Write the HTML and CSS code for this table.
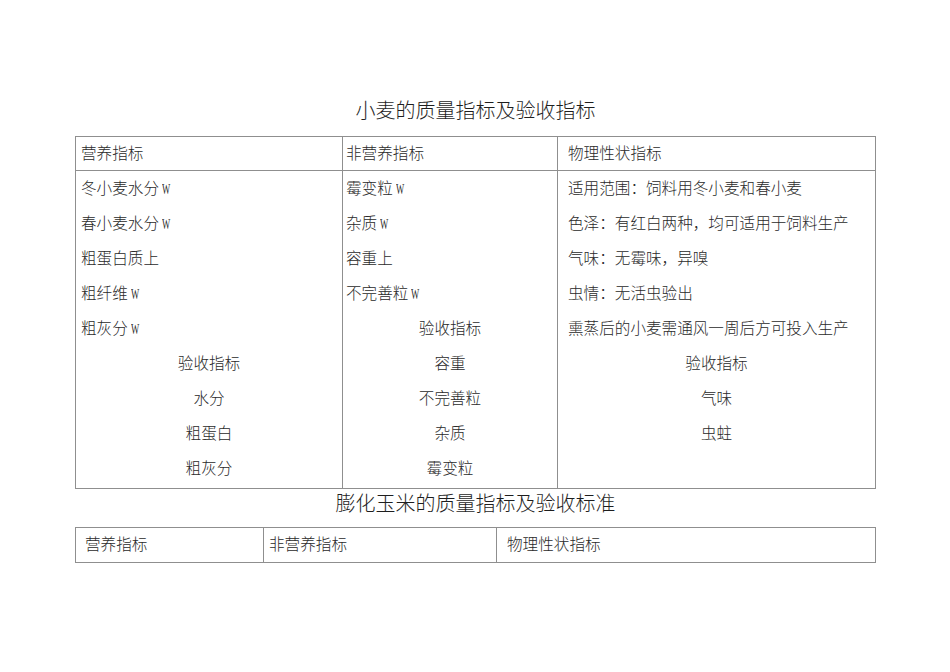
FILE: index.html
```html
<!DOCTYPE html>
<html lang="zh">
<head>
<meta charset="utf-8">
<link rel="stylesheet" href="styles.css">
</head>
<body>
<div class="page">
  <div class="title">小麦的质量指标及验收指标</div>
  <div class="tbl t1">
    <div class="hd c1">营养指标</div>
    <div class="hd c2">非营养指标</div>
    <div class="hd c3 last">物理性状指标</div>
    <div class="col c1">
      <div class="ln">冬小麦水分<span class="w">W</span></div>
      <div class="ln">春小麦水分<span class="w">W</span></div>
      <div class="ln">粗蛋白质上</div>
      <div class="ln">粗纤维<span class="w">W</span></div>
      <div class="ln">粗灰分<span class="w">W</span></div>
      <div class="ln ctr">验收指标</div>
      <div class="ln ctr">水分</div>
      <div class="ln ctr">粗蛋白</div>
      <div class="ln ctr">粗灰分</div>
    </div>
    <div class="col c2">
      <div class="ln">霉变粒<span class="w">W</span></div>
      <div class="ln">杂质<span class="w">W</span></div>
      <div class="ln">容重上</div>
      <div class="ln">不完善粒<span class="w">W</span></div>
      <div class="ln ctr">验收指标</div>
      <div class="ln ctr">容重</div>
      <div class="ln ctr">不完善粒</div>
      <div class="ln ctr">杂质</div>
      <div class="ln ctr">霉变粒</div>
    </div>
    <div class="col c3 last">
      <div class="ln">适用范围：饲料用冬小麦和春小麦</div>
      <div class="ln">色泽：有红白两种，均可适用于饲料生产</div>
      <div class="ln">气味：无霉味，异嗅</div>
      <div class="ln">虫情：无活虫验出</div>
      <div class="ln">熏蒸后的小麦需通风一周后方可投入生产</div>
      <div class="ln ctr">验收指标</div>
      <div class="ln ctr">气味</div>
      <div class="ln ctr">虫蛀</div>
    </div>
  </div>
  <div class="title t2title">膨化玉米的质量指标及验收标准</div>
  <div class="tbl t2">
    <div class="hd d1">营养指标</div>
    <div class="hd d2">非营养指标</div>
    <div class="hd d3 last">物理性状指标</div>
  </div>
</div>
</body>
</html>
```
FILE: styles.css
```css
html, body {
  margin: 0;
  padding: 0;
  background: #ffffff;
}
body {
  font-family: "Noto Sans CJK SC", "Liberation Serif", serif;
  color: #2a2a2a;
  font-weight: 300;
}
.page {
  width: 801px;
  padding: 96px 0 0 75px;
}
.title {
  text-align: center;
  font-size: 20px;
  line-height: 28px;
  height: 28px;
  margin-bottom: 12px;
  color: #1e1e1e;
}
.t2title {
  margin-bottom: 10px;
}
.tbl {
  display: grid;
  border: 1px solid #8f8f8f;
  font-size: 15.6px;
}
.t1 {
  grid-template-columns: 267px 215px 1fr;
}
.t2 {
  grid-template-columns: 188px 233px 1fr;
}
.hd {
  height: 33px;
  line-height: 30px;
  border-right: 1px solid #8f8f8f;
  white-space: nowrap;
}
.t1 .hd {
  border-bottom: 1px solid #8f8f8f;
}
.t2 .hd {
  height: 34px;
  line-height: 31px;
}
.last {
  border-right: none;
}
.col {
  border-right: 1px solid #8f8f8f;
  height: 317px;
}
.col.last {
  border-right: none;
}
.hd.c1 { padding-left: 5px; }
.hd.c2 { padding-left: 3px; }
.hd.c3 { padding-left: 10px; }
.col.c1 .ln { padding-left: 5px; }
.col.c2 .ln { padding-left: 3px; }
.col.c3 .ln { padding-left: 10px; }
.col .ln.ctr { padding-left: 0; text-align: center; }
.d1 { padding-left: 9px; }
.d2 { padding-left: 5px; }
.d3 { padding-left: 10px; }
.ln {
  height: 35px;
  line-height: 32px;
  white-space: nowrap;
}
.w {
  font-family: "Liberation Serif", serif;
  font-size: 14.5px;
  display: inline-block;
  transform: scaleX(0.6);
  transform-origin: left center;
  margin-left: 3px;
  width: 9px;
}
```
